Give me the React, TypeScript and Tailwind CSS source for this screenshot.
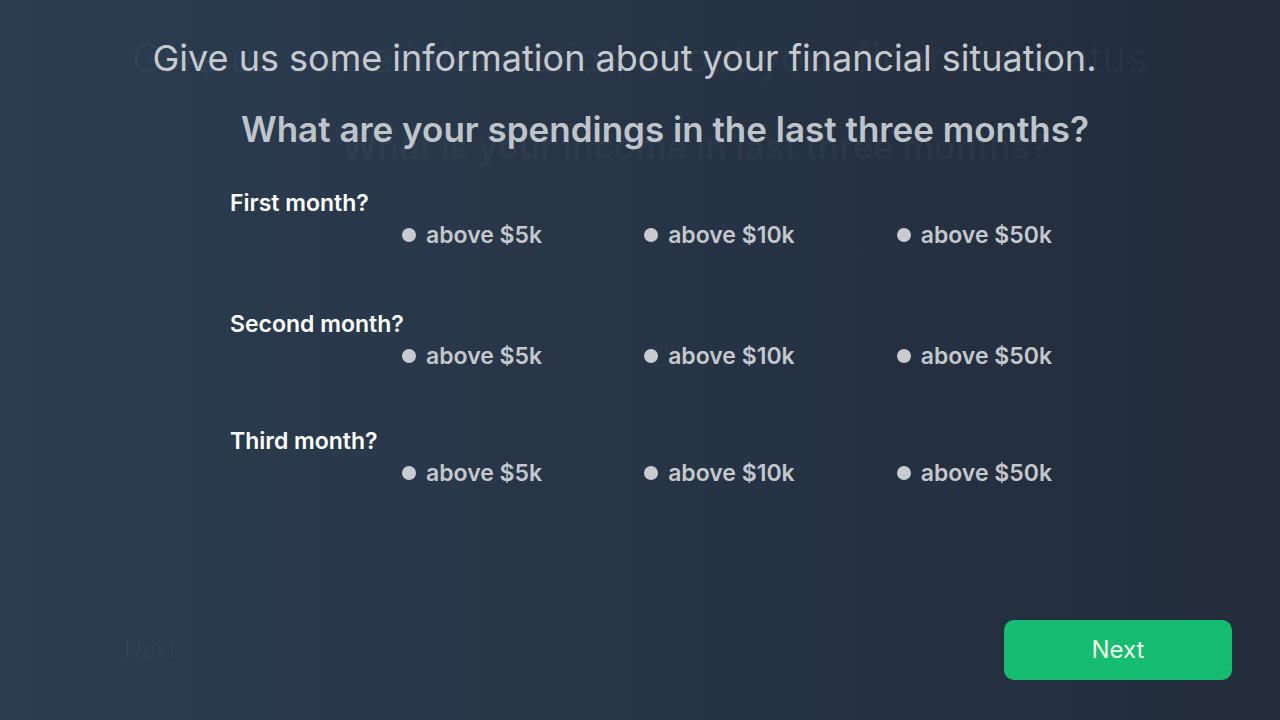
import React, { useState } from 'react';

const months = ['First month?', 'Second month?', 'Third month?'];
const options = ['above $5k', 'above $10k', 'above $50k'];

function OptionRow({ name }: { name: string }) {
  const [picked, setPicked] = useState<string | null>(null);
  return (
    <div className="flex items-center gap-[102px] pl-[172px] mt-1">
      {options.map(opt => (
        <button
          key={opt}
          type="button"
          onClick={() => setPicked(opt)}
          className="flex items-center gap-[10px] h-7 text-[23px] font-semibold text-[#c4c7cc] cursor-pointer"
          aria-label={`${name} ${opt}`}
        >
          <span
            className={
              picked === opt
                ? 'w-[14px] h-[14px] rounded-full bg-[#14bb70]'
                : 'w-[14px] h-[14px] rounded-full bg-[#c8cbd0]'
            }
          />
          <span>{opt}</span>
        </button>
      ))}
    </div>
  );
}

export default function App() {
  return (
    <div
      className="relative w-full min-h-screen h-[720px] overflow-hidden bg-gradient-to-r from-[#2c3d51] to-[#222c3b] flex flex-col"
      style={{ fontFamily: 'Inter, "Noto Sans", sans-serif' }}
    >
      {/* previous step, fading out */}
      <div className="absolute inset-0 pointer-events-none text-white/[0.03]">
        <p className="absolute left-0 right-0 top-[33px] text-center text-[41px] leading-[50px]">
          Give us some information about your financial status
        </p>
        <p className="absolute left-[342px] top-[125px] text-[35px] leading-[42px] font-semibold">
          What is your income in last three months?
        </p>
        <p className="absolute left-[124px] top-[635px] text-[24px] leading-[30px]">Next</p>
      </div>

      <div className="relative flex flex-col">
        <h1 className="mt-[38px] pr-[31px] text-center text-[36px] leading-10 font-normal text-[#c6cacf]">
          Give us some information about your financial situation.
        </h1>
        <h2 className="mt-[31px] pl-[50px] text-center text-[35px] leading-10 font-semibold text-[#bfc4ca]">
          What are your spendings in the last three months?
        </h2>

        <div className="mt-[40px] pl-[230px] flex flex-col">
          {months.map((m, i) => (
            <div key={m} className={i === 0 ? '' : i === 1 ? 'mt-[61px]' : 'mt-[57px]'}>
              <p className="h-7 leading-7 text-[23px] font-semibold text-white">{m}</p>
              <OptionRow name={m} />
            </div>
          ))}
        </div>
      </div>

      <div className="relative flex-1 flex items-end justify-end pr-12 pb-10">
        <button
          type="button"
          className="w-[228px] h-[60px] rounded-[10px] bg-[#15bc72] text-[24px] text-[#f1f6ea] cursor-pointer"
        >
          Next
        </button>
      </div>
    </div>
  );
}
